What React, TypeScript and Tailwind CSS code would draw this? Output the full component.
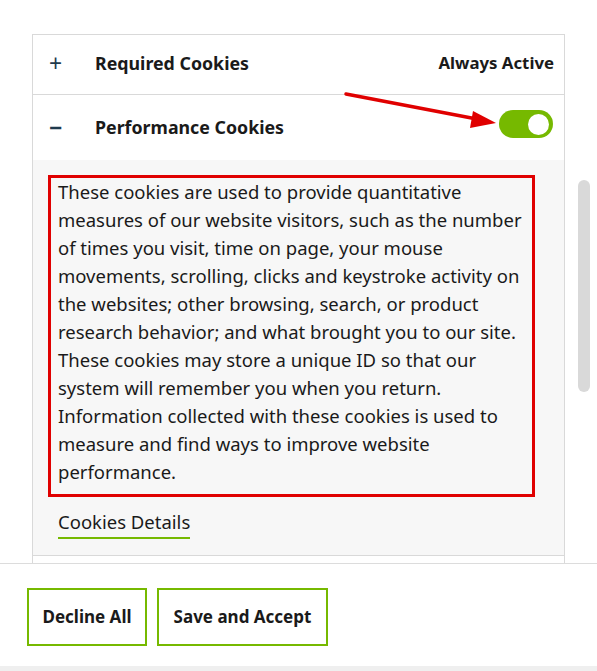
import React from "react";

const font = { fontFamily: "'Noto Sans', 'Liberation Sans', sans-serif" };

const lines = [
  "These cookies are used to provide quantitative",
  "measures of our website visitors, such as the number",
  "of times you visit, time on page, your mouse",
  "movements, scrolling, clicks and keystroke activity on",
  "the websites; other browsing, search, or product",
  "research behavior; and what brought you to our site.",
  "These cookies may store a unique ID so that our",
  "system will remember you when you return.",
  "Information collected with these cookies is used to",
  "measure and find ways to improve website",
  "performance.",
];

function Toggle() {
  return (
    <span className="relative inline-flex h-[28px] w-[54px] items-center rounded-full bg-[#76b900]">
      <span className="absolute right-[4px] h-[21px] w-[21px] rounded-full bg-white" />
    </span>
  );
}

export default function App() {
  return (
    <div className="relative flex h-[671px] w-[597px] flex-col bg-white text-[#1a1a1a]" style={font}>
      {/* scrolling list */}
      <div className="flex h-[563px] overflow-hidden">
        <div className="ml-[32px] mt-[34px] w-[533px] shrink-0">
          <div className="flex h-[61px] items-center border border-[#d9d9d9] pb-[3px] pl-[16px] pr-[10px]">
            <span className="w-[46px] text-[23px] leading-none text-[#1f3a4d]">+</span>
            <span className="text-[17.8px] font-bold">Required Cookies</span>
            <span className="ml-auto text-[16.8px] font-bold">Always Active</span>
          </div>
          <div className="border-x border-b border-[#d9d9d9]">
            <div className="flex h-[65px] items-center pb-[1px] pl-[16px] pr-[11px]">
              <span className="w-[46px] text-[23px] font-bold leading-none text-[#1f3a4d]">−</span>
              <span className="text-[17.8px] font-bold">Performance Cookies</span>
              <span className="ml-auto">
                <Toggle />
              </span>
            </div>
            <div className="bg-[#f7f7f7] px-[15px] pb-[16px] pt-[15px]">
              <p className="w-[487px] whitespace-nowrap border-[3px] border-[#e00000] px-[7px] pb-[8px] pt-0 text-[18.5px] leading-[28px] text-[#1a1a1a]">
                {lines.map((l) => (
                  <span key={l} className="block">
                    {l}
                  </span>
                ))}
              </p>
              <div className="mt-[13px] pl-[10px]">
                <span className="inline-block border-b-2 border-[#76b900] pb-[3px] text-[18.5px] leading-[24px]">
                  Cookies Details
                </span>
              </div>
            </div>
          </div>
          <div className="h-[20px] border-x border-[#d9d9d9]" />
        </div>
        <div className="ml-[13px] mt-[180px] h-[212px] w-[12px] rounded-full bg-[#d9d9d9]" />
      </div>

      {/* footer */}
      <div className="flex h-[103px] items-start gap-[10px] border-t border-[#dcdcdc] px-[27px] pt-[24px]">
        <button className="h-[58px] w-[120px] border-2 border-[#76b900] text-[17px] font-bold">Decline All</button>
        <button className="h-[58px] w-[171px] border-2 border-[#76b900] text-[17px] font-bold">Save and Accept</button>
      </div>
      <div className="h-[5px] bg-[#efefef]" />

      {/* annotation arrow */}
      <svg className="pointer-events-none absolute left-0 top-0" width="597" height="671">
        <line x1="346" y1="94" x2="482" y2="120" stroke="#e00000" strokeWidth="3.5" strokeLinecap="round" />
        <polygon points="496,123 473,111 470,128" fill="#e00000" />
      </svg>
    </div>
  );
}
